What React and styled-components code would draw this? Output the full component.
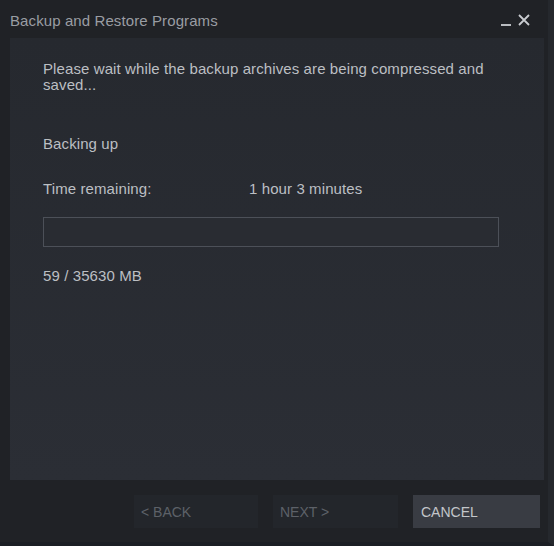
import React from "react";
import styled, { createGlobalStyle } from "styled-components";

const Global = createGlobalStyle`
  html, body { margin: 0; padding: 0; background: #1f2125; }
  body { font-family: "Liberation Sans", Arial, sans-serif; }
`;

const Window = styled.div`
  width: 554px;
  height: 546px;
  box-sizing: border-box;
  background: #202226;
  display: flex;
  flex-direction: column;
  border-right: 6px solid #25282d;
  border-bottom: 4px solid #1b1e24;
`;

const TitleBar = styled.div`
  height: 38px;
  display: flex;
  align-items: center;
  padding: 2px 16px 0 10px;
  box-sizing: border-box;
  flex: none;
`;

const Title = styled.div`
  flex: 1;
  font-size: 15px;
  color: #9a9da3;
  letter-spacing: 0.1px;
`;

const WinBtn = styled.span`
  width: 16px;
  height: 18px;
  display: flex;
  align-items: center;
  justify-content: center;
  margin-left: 2px;
`;

const Panel = styled.div`
  margin: 0 4px 0 10px;
  height: 442px;
  background: linear-gradient(180deg, #26292f 0%, #2b2e35 100%);
  padding: 23px 30px 0 33px;
  box-sizing: border-box;
  color: #bcbfc3;
  font-size: 15px;
  letter-spacing: 0.1px;
  flex: none;
`;

const Para = styled.p`
  margin: 0;
  line-height: 16px;
`;

const Status = styled.div`
  margin-top: ${(p) => p.$gap}px;
  line-height: 16px;
`;

const Row = styled.div`
  display: flex;
  margin-top: 29px;
  line-height: 16px;
`;

const Label = styled.span`
  width: 206px;
`;

const Progress = styled.div`
  margin-top: 20px;
  width: 456px;
  height: 30px;
  box-sizing: border-box;
  border: 1px solid #4c5058;
  background: #292c32;
`;

const Footer = styled.div`
  flex: 1;
  display: flex;
  justify-content: flex-end;
  align-items: flex-start;
  padding: 15px 8px 0 0;
  gap: 15px;
`;

const Button = styled.div`
  width: ${(p) => p.$w}px;
  height: 33px;
  box-sizing: border-box;
  background: ${(p) => (p.$primary ? "#393c43" : "#23262b")};
  color: ${(p) => (p.$primary ? "#c3c6ca" : "#5d6168")};
  font-size: 14px;
  display: flex;
  align-items: center;
  padding-left: ${(p) => (p.$primary ? 8 : 7)}px;
  padding-top: 1px;
`;

export default function App() {
  return (
    <>
      <Global />
      <Window>
        <TitleBar>
          <Title>Backup and Restore Programs</Title>
          <WinBtn>
            <svg width="12" height="14" viewBox="0 0 12 14">
              <rect x="1" y="11" width="10" height="2" fill="#b9bcc0" />
            </svg>
          </WinBtn>
          <WinBtn>
            <svg width="14" height="14" viewBox="0 0 14 14">
              <path d="M2 2 L12 12 M12 2 L2 12" stroke="#c9ccd0" strokeWidth="1.8" />
            </svg>
          </WinBtn>
        </TitleBar>
        <Panel>
          <Para>
            Please wait while the backup archives are being compressed and
            <br />
            saved...
          </Para>
          <Status $gap={43}>Backing up</Status>
          <Row>
            <Label>Time remaining:</Label>
            <span>1 hour 3 minutes</span>
          </Row>
          <Progress />
          <Status $gap={21}>59 / 35630 MB</Status>
        </Panel>
        <Footer>
          <Button $w={124}>&lt; BACK</Button>
          <Button $w={125}>NEXT &gt;</Button>
          <Button $w={127} $primary>CANCEL</Button>
        </Footer>
      </Window>
    </>
  );
}
